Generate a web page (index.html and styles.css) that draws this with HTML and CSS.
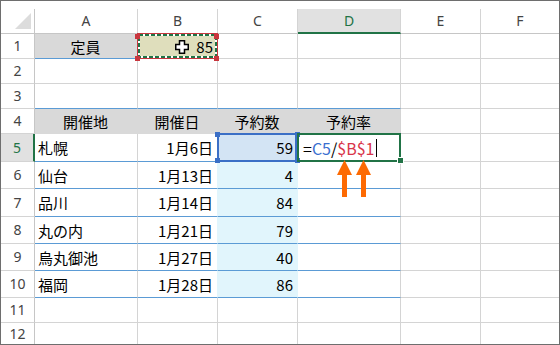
FILE: index.html
```html
<!DOCTYPE html>
<html lang="ja">
<head>
<meta charset="utf-8">
<link rel="stylesheet" href="styles.css">
</head>
<body>
<div class="sheet">
  <div class="strip"></div>
  <div class="grid">
    <div class="c corner"><svg width="33" height="24" viewBox="0 0 33 24"><polygon points="30,4 30,20 14,20" fill="#dcdcdc"/></svg></div>
    <div class="c hd">A</div>
    <div class="c hd">B</div>
    <div class="c hd">C</div>
    <div class="c hd on">D</div>
    <div class="c hd">E</div>
    <div class="c hd last">F</div>

    <div class="c rn">1</div>
    <div class="c gray bb">定員</div>
    <div class="c olive r">85</div>
    <div class="c"></div>
    <div class="c"></div>
    <div class="c"></div>
    <div class="c last"></div>

    <div class="c rn">2</div>
    <div class="c"></div>
    <div class="c"></div>
    <div class="c"></div>
    <div class="c"></div>
    <div class="c"></div>
    <div class="c last"></div>

    <div class="c rn">3</div>
    <div class="c bb"></div>
    <div class="c bb"></div>
    <div class="c bb"></div>
    <div class="c bb"></div>
    <div class="c"></div>
    <div class="c last"></div>

    <div class="c rn">4</div>
    <div class="c gray th">開催地</div>
    <div class="c gray th">開催日</div>
    <div class="c gray th">予約数</div>
    <div class="c gray th dend">予約率</div>
    <div class="c"></div>
    <div class="c last"></div>

    <div class="c rn on">5</div>
    <div class="c bb">札幌</div>
    <div class="c bb r">1月6日</div>
    <div class="c bb r sel">59</div>
    <div class="c bb fx"><span class="op">=</span><span class="rb">C5</span><span class="op">/</span><span class="rr">$B$1</span><span class="caret"></span></div>
    <div class="c"></div>
    <div class="c last"></div>

    <div class="c rn">6</div>
    <div class="c bb">仙台</div>
    <div class="c bb r cyl">1月13日</div>
    <div class="c bb r cy">4</div>
    <div class="c bb"></div>
    <div class="c"></div>
    <div class="c last"></div>

    <div class="c rn">7</div>
    <div class="c bb">品川</div>
    <div class="c bb r cyl">1月14日</div>
    <div class="c bb r cy">84</div>
    <div class="c bb"></div>
    <div class="c"></div>
    <div class="c last"></div>

    <div class="c rn">8</div>
    <div class="c bb">丸の内</div>
    <div class="c bb r cyl">1月21日</div>
    <div class="c bb r cy">79</div>
    <div class="c bb"></div>
    <div class="c"></div>
    <div class="c last"></div>

    <div class="c rn">9</div>
    <div class="c bb">烏丸御池</div>
    <div class="c bb r cyl">1月27日</div>
    <div class="c bb r cy">40</div>
    <div class="c bb"></div>
    <div class="c"></div>
    <div class="c last"></div>

    <div class="c rn">10</div>
    <div class="c bb">福岡</div>
    <div class="c bb r cyl">1月28日</div>
    <div class="c bb r cy">86</div>
    <div class="c bb"></div>
    <div class="c"></div>
    <div class="c last"></div>

    <div class="c rn">11</div>
    <div class="c"></div>
    <div class="c"></div>
    <div class="c"></div>
    <div class="c"></div>
    <div class="c"></div>
    <div class="c last"></div>

    <div class="c rn nb">12</div>
    <div class="c nb"></div>
    <div class="c nb"></div>
    <div class="c nb"></div>
    <div class="c nb"></div>
    <div class="c nb"></div>
    <div class="c last nb"></div>
  </div>

  <div class="ref-red"></div>
  <svg class="ants" width="79" height="24" viewBox="0 0 79 24"><rect x="1" y="1" width="77" height="22" fill="none" stroke="#ffffff" stroke-width="2"/><rect x="1" y="1" width="77" height="22" fill="none" stroke="#217346" stroke-width="2" stroke-dasharray="4 2"/></svg>
  <div class="hdl red h-tl"></div>
  <div class="hdl red h-tr"></div>
  <div class="hdl red h-bl"></div>
  <div class="hdl red h-br"></div>

  <div class="ref-blue"></div>
  <div class="hdl blue b-tl"></div>
  <div class="hdl blue b-tr"></div>
  <div class="hdl blue b-bl"></div>
  <div class="hdl blue b-br"></div>

  <div class="active"></div>
  <div class="fill-handle"></div>

  <svg class="cursor" width="14" height="14" viewBox="0 0 14 14"><polygon points="4.5,0.75 9.5,0.75 9.5,4.5 13.25,4.5 13.25,9.5 9.5,9.5 9.5,13.25 4.5,13.25 4.5,9.5 0.75,9.5 0.75,4.5 4.5,4.5" fill="#fff" stroke="#000" stroke-width="1.5" stroke-linejoin="miter"/></svg>

  <svg class="arrows" width="36" height="37" viewBox="0 0 36 37"><polygon points="8.5,0 16,15 1,15" fill="#fd6a02"/><rect x="6" y="14" width="5" height="23" fill="#fd6a02"/><polygon points="27.5,0 35,15 20,15" fill="#fd6a02"/><rect x="25" y="14" width="5" height="23" fill="#fd6a02"/></svg>
</div>
</body>
</html>
```

FILE: styles.css
```css
html, body {
  margin: 0;
  padding: 0;
  background: #ffffff;
}

.sheet {
  position: relative;
  width: 560px;
  height: 345px;
  box-sizing: border-box;
  border: 1px solid #6e6e6e;
  background: #ffffff;
  overflow: hidden;
}

.strip {
  height: 8px;
}

.grid {
  display: grid;
  grid-template-columns: 34px 103px 80px 80px 103px 80px 78px;
  grid-template-rows: 25px 25px 25px 25px 25px 28px 27px 28px 27px 27px 27px 25px 21px;
}

.c {
  box-sizing: border-box;
  border-right: 1px solid #d4d4d4;
  border-bottom: 1px solid #d4d4d4;
  display: flex;
  align-items: center;
  padding: 0 4px 0 3px;
  font-family: "Noto Sans CJK JP", "Noto Sans", sans-serif;
  font-size: 15px;
  line-height: 1;
  color: #000000;
  white-space: nowrap;
  overflow: hidden;
}

.c.last { border-right: 0; }
.c.nb { border-bottom: 0; }

.corner {
  padding: 0;
  display: block;
  border-right-color: #c6c6c6;
  border-bottom-color: #c6c6c6;
}
.corner svg { display: block; }

.hd {
  justify-content: center;
  font-family: "Noto Sans", "DejaVu Sans", sans-serif;
  font-size: 14px;
  color: #444444;
  border-bottom-color: #c6c6c6;
  padding: 0;
}

.rn {
  justify-content: center;
  font-family: "Noto Sans", "DejaVu Sans", sans-serif;
  font-size: 14px;
  color: #444444;
  border-right-color: #c6c6c6;
  padding: 0;
}

.hd.on {
  background: #e1e1e1;
  color: #217346;
  border-bottom: 2px solid #217346;
}

.rn.on {
  background: #e1e1e1;
  color: #217346;
  border-right: 2px solid #217346;
}

.gray {
  background: #d9d9d9;
  border-right-color: #d9d9d9;
  justify-content: center;
}

.th { border-bottom-color: #d9d9d9; }
.th.dend { border-right-color: #d4d4d4; }

.olive {
  background: #dfdebc;
}

.bb { border-bottom-color: #5b9bd5; }

.r { justify-content: flex-end; }

.sel { background: #d3e4f4; }

.cy {
  background: #e1f5fc;
  border-right-color: #e1f5fc;
}

.cyl { border-right-color: #e1f5fc; }

.fx {
  padding-left: 5px;
  font-size: 16px;
}
.op { color: #000000; }
.rb { color: #3b6fd0; }
.rr { color: #d9364b; }
.caret {
  display: inline-block;
  width: 1px;
  height: 18px;
  background: #000000;
  margin-left: 2px;
}

.ref-red {
  position: absolute;
  left: 136px;
  top: 32px;
  width: 81px;
  height: 26px;
  box-sizing: border-box;
  border: 1px solid #c8363e;
}

.ants {
  position: absolute;
  left: 137px;
  top: 33px;
}

.hdl {
  position: absolute;
  width: 5px;
  height: 5px;
}
.hdl.red { background: #c8363e; }
.hdl.blue { background: #3b6fc6; }

.h-tl { left: 134px; top: 33px; }
.h-tr { left: 213px; top: 33px; }
.h-bl { left: 134px; top: 55px; }
.h-br { left: 213px; top: 55px; }

.ref-blue {
  position: absolute;
  left: 216px;
  top: 132px;
  width: 80px;
  height: 29px;
  box-sizing: border-box;
  border: 2px solid #3b6fc6;
}

.b-tl { left: 214px; top: 131px; }
.b-tr { left: 294px; top: 131px; }
.b-bl { left: 214px; top: 157px; }
.b-br { left: 294px; top: 157px; }

.active {
  position: absolute;
  left: 296px;
  top: 132px;
  width: 104px;
  height: 29px;
  box-sizing: border-box;
  border: 2px solid #217346;
}

.fill-handle {
  position: absolute;
  left: 397px;
  top: 157px;
  width: 5px;
  height: 5px;
  background: #217346;
  box-shadow: 0 0 0 1px #ffffff;
}

.cursor {
  position: absolute;
  left: 174px;
  top: 39px;
}

.arrows {
  position: absolute;
  left: 335px;
  top: 159px;
}
```
